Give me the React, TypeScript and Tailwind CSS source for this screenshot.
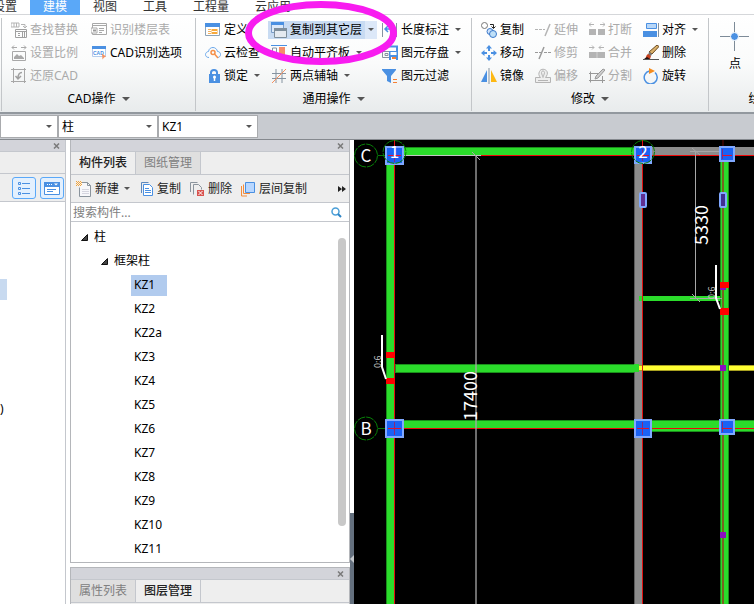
import React from "react";
import type { ReactNode } from "react";

const BLUE = "#4a90e2";
const GREY = "#b4b4b4";
const SLATE = "#8593a0";

function Icon({ children, size = 16 }: { children: ReactNode; size?: number }) {
  return (
    <svg width={size} height={size} viewBox={`0 0 ${size} ${size}`} fill="none" className="shrink-0" aria-hidden="true">
      {children}
    </svg>
  );
}

function Caret({ large = false }: { large?: boolean }) {
  return large ? (
    <svg width="8" height="4" viewBox="0 0 8 4" className="shrink-0" aria-hidden="true">
      <path d="M0 0h8L4 4z" fill="#555" />
    </svg>
  ) : (
    <svg width="6" height="3" viewBox="0 0 6 3" className="shrink-0" aria-hidden="true">
      <path d="M0 0h6L3 3z" fill="#555" />
    </svg>
  );
}

const icons = {
  findReplace: (
    <Icon>
      <path d="M0 1h8v4H0zM3 1v4M5.500 1v4M10 2.500h4v3M12 4l2 2 2-2" stroke={GREY} />
      <path d="M4.500 7.500h11v8h-11zM4 9.500h12M7 11.500h2M7 13.500h2M11.500 9v6M13.500 9v6" stroke="#a0a0a0" />
    </Icon>
  ),
  scale: (
    <Icon>
      <path d="M1 2.500h5M3 .5l-2 2 2 2M10 2.500h5M13 .5l2 2-2 2" stroke="#a8a8a8" />
      <path d="M1.500 6.500h13v9h-13z" stroke="#a8a8a8" />
      <path d="M3 14v-2l3-3 2 2 2-1 3 3v1z" fill="#a8a8a8" />
    </Icon>
  ),
  restore: (
    <Icon>
      <path d="M0 1.500h15M2.500 0v15M0 13.500h15M13.500 0v15" stroke="#a8a8a8" />
      <path d="M11 4.500c-3 0-4 2-4 6M4.500 8L7 11l3-3" stroke="#a0a0a0" strokeWidth="1.500" />
    </Icon>
  ),
  floorTable: (
    <Icon>
      <path d="M1.500 1.500h14v11h-14zM1 3.500h14" stroke="#a8a8a8" />
      <path d="M0 6h6v5H0z" fill="#fff" stroke="#a8a8a8" />
      <path d="M2 7.500h3v2H2z" fill="#999" />
      <path d="M8 6.500h5M8 8.500h5M8 10.500h3" stroke="#a8a8a8" />
    </Icon>
  ),
  cadOptions: (
    <Icon>
      <path d="M1.500 1.500h13v10h-13z" fill="#fff" stroke="#b5cdec" />
      <path d="M1 1h14v3H1z" fill={BLUE} />
      <text x="2" y="10" fontSize="5" fontWeight="700" fill={BLUE} fontFamily="Liberation Sans, sans-serif">CAD</text>
      <path d="M11 8.500l4 3-2 1-1.500 2z" fill="#f59160" />
    </Icon>
  ),
  define: (
    <Icon>
      <path d="M.5 1.500h14v12H.5z" fill="#fff" stroke="#8fa3b5" />
      <path d="M0 1h15v4H0z" fill={BLUE} />
      <path d="M3 7.500h3M3 9.500h3M3 11.500h3" stroke="#f5b25f" />
      <path d="M6.500 7h6v5h-6z" fill="#f7a93b" />
      <path d="M7 9.500h5" stroke="#fff" />
    </Icon>
  ),
  cloud: (
    <Icon>
      <path d="M4 12.500C1.500 12.500.5 11 .5 9.500S2 6.500 3.500 6.500C4 3.500 6 2.500 8 2.500s4 1.500 4.500 4c2 0 3 1.500 3 3s-1 3-3 3" stroke="#6aa7ea" />
      <circle cx="8" cy="7.500" r="2" stroke="#f5904a" strokeWidth="1.500" />
      <path d="M9.500 9l3.500 4" stroke="#f5904a" strokeWidth="1.500" />
    </Icon>
  ),
  lock: (
    <Icon>
      <path d="M6 7V4.500C6 1 12 1 12 4.500V7" stroke={BLUE} strokeWidth="2" />
      <path d="M4 6h11v9H4z" fill={BLUE} />
      <circle cx="9.500" cy="9" r="1.500" fill="#fff" />
      <path d="M9.500 9v4" stroke="#fff" strokeWidth="1.500" />
    </Icon>
  ),
  copyFloor: (
    <Icon>
      <path d="M.5.5h12v10H.5z" fill="#dce9f9" stroke="#7a9cc6" />
      <path d="M0 0h13v3H0z" fill={BLUE} />
      <path d="M3.500 6.500h12v9h-12z" fill="#e5eaf0" stroke="#7f8f9c" />
      <path d="M3 6h13v3H3z" fill="#7f8f9c" />
    </Icon>
  ),
  alignSlab: (
    <Icon>
      <path d="M0 .5h16" stroke={BLUE} />
      <path d="M1.500 3v8h4V3z" stroke={SLATE} fill="#fff" />
      <path d="M8 2h6v10H8z" fill="#f58d6a" />
    </Icon>
  ),
  auxAxis: (
    <Icon>
      <path d="M5 1v14M11 1v14M1 5.500h14M1 10.500h14" stroke={SLATE} />
      <path d="M1 15L15 1" stroke="#f59160" />
    </Icon>
  ),
  lengthMark: (
    <Icon>
      <path d="M.5 1v14M14.500 1v14" stroke={SLATE} />
      <path d="M3 7h10M6 4L3 7l3 3" stroke={BLUE} strokeWidth="1.500" />
    </Icon>
  ),
  saveElement: (
    <Icon>
      <path d="M4 1.500h11v6" stroke={BLUE} strokeWidth="2" />
      <path d="M.5 6.500h7v6h-7zM3 8.500h3v2H3z" stroke={SLATE} />
      <path d="M7 6h9v9H7z" fill={BLUE} />
      <path d="M8.500 7h6v3h-6z" fill="#fff" />
      <path d="M9 12h5v3H9z" fill="#fff" />
      <path d="M10 12h4v2h-4z" fill="#f58035" />
    </Icon>
  ),
  filter: (
    <Icon>
      <path d="M0 1h14v1L9 8v7l-4-2V8L0 2z" fill={BLUE} />
      <path d="M11 11.500h4M11 14.500h4" stroke="#f58035" />
    </Icon>
  ),
  copy: (
    <Icon>
      <circle cx="3.500" cy="3.500" r="3" fill="#fff" stroke="#777" />
      <path d="M9 2.500h3.500V6M10.500 4.500l2 2 2-2" stroke="#222" />
      <circle cx="9" cy="9.500" r="3" fill="#cfe2fa" stroke="#3a78c9" />
      <circle cx="12" cy="12" r="3.500" fill="#bfe0f8" stroke="#3a78c9" />
    </Icon>
  ),
  move: (
    <Icon>
      <path d="M8 0l3 3.500H9V6H7V3.500H5zM8 16l-3-3.500h2V10h2v2.500h2zM0 8l3.500-3v2H6v2H3.500v2zM16 8l-3.500 3V9H10V7h2.500V5z" fill={BLUE} />
    </Icon>
  ),
  mirror: (
    <Icon>
      <path d="M6 2v12H0z" fill={BLUE} />
      <path d="M8 0v16" stroke={SLATE} />
      <path d="M10 2v12h6z" fill="#fdb813" />
    </Icon>
  ),
  extend: (
    <Icon>
      <path d="M0 7.500h10" stroke={GREY} strokeDasharray="3 1" />
      <path d="M10 14l5-12" stroke={GREY} strokeWidth="1.500" />
    </Icon>
  ),
  trim: (
    <Icon>
      <path d="M0 7.500h6M9 7.500h7" stroke="#999" strokeDasharray="3 1" />
      <path d="M4 14L9 2" stroke="#999" strokeWidth="1.500" />
    </Icon>
  ),
  offset: (
    <Icon>
      <path d="M.5 14.500v-5h5c-2-2-2-4-1-6 1-3 6-3 7.500 0 1 2 0 4-1.500 6h5v5z" stroke={GREY} fill="#eee" />
      <path d="M3 12.500h10M6.500 4.500c0-2 3-2 3 0S8 8 8 9.500C8 8 6.500 6.500 6.500 4.500z" stroke={GREY} />
    </Icon>
  ),
  breakUp: (
    <Icon>
      <path d="M0 2.500h5M2 .5l-2 2 2 2M11 2.500h5M14 .5l2 2-2 2" stroke={GREY} />
      <path d="M0 7h7v6H0zM9 7h7v6H9z" fill={GREY} />
    </Icon>
  ),
  merge: (
    <Icon>
      <path d="M0 2.500h5M3 .5l2 2-2 2M15 2.500h-5M12 .5l-2 2 2 2" stroke={GREY} />
      <path d="M0 7h16v6H0z" fill={GREY} />
      <path d="M8 7v6" stroke="#d0d0d0" />
    </Icon>
  ),
  split: (
    <Icon>
      <path d="M1.500 3.500v11M0 5.500h10M0 12.500h16M13.500 8v7" stroke="#999" />
      <path d="M14 1l2 1-7 8-3 1 1-3z" fill="#ccc" stroke="#999" />
    </Icon>
  ),
  align: (
    <Icon>
      <path d="M3.500 1.500h10v5h-10z" fill="#b8d7f8" stroke={BLUE} />
      <path d="M0 9h14v6H0z" fill={BLUE} />
      <path d="M15.500 1v14" stroke={SLATE} />
    </Icon>
  ),
  brush: (
    <Icon>
      <path d="M0 14.500h16" stroke="#555" />
      <path d="M14 0l2 1.500L9 9 6 7z" fill="#d9b06a" stroke="#6b4a20" />
      <path d="M6 7l3 2-1 2-3-1z" fill="#777" />
      <path d="M5 9l3 2-1 3H2c1-1 1-4 3-5z" fill="#c8401c" />
      <path d="M1 14l3-2 3 2z" fill="#201010" />
    </Icon>
  ),
  rotate: (
    <Icon>
      <path d="M6.500 3A6.500 6.500 0 1 0 12 4.500" stroke={BLUE} strokeWidth="1.500" />
      <path d="M6 0l6 3-6 3z" fill="#f58c1f" />
    </Icon>
  ),
  newItem: (
    <Icon>
      <path d="M5.500 1.500h6l3 3v11h-11v-9" fill="#f7f7fa" stroke="#8b949d" />
      <path d="M11.500 1.500v3h3" stroke="#8b949d" />
      <path d="M6 8.500h7M6 10.500h7M6 12.500h7" stroke="#d5d5df" />
      <path d="M0 .5h5M1 1.500h5M0 2.500h5M1 3.500h5M0 4.500h5" stroke="#f2a33a" strokeDasharray="1 1" />
    </Icon>
  ),
  copyDoc: (
    <Icon size={14}>
      <path d="M1.500 11V.5h7" stroke="#5d88bd" />
      <path d="M3.500 2.500h6l3 3v8h-9z" fill="#fff" stroke={BLUE} />
      <path d="M5 6.500h4M5 8.500h6M5 10.500h6" stroke={BLUE} />
    </Icon>
  ),
  deleteDoc: (
    <Icon>
      <path d="M1.500 11V1.500h7M4.500 13.500v-10h5l3 3v2" stroke="#8b949d" />
      <path d="M8 9h7v6H8z" fill="#d9534f" />
      <path d="M9.500 10l4 4M13.500 10l-4 4" stroke="#fff" />
    </Icon>
  ),
  floorCopy: (
    <Icon>
      <path d="M1.500 5v10H7M3.500 3.500v9H10" stroke="#f58c3a" />
      <path d="M5.500 1.500h9v10h-9z" fill="#b8d7ff" stroke={BLUE} />
    </Icon>
  ),
};

type Command = { icon: ReactNode; label: string; menu?: boolean; disabled?: boolean; active?: boolean };

function RibbonCommand({ icon, label, menu, disabled, active }: Command) {
  return (
    <div className="flex h-[23px] items-center">
      <button
        disabled={disabled}
        className={`flex h-[18px] items-center gap-[3px] px-[3px] ${active ? "bg-[#c8dbf2]" : ""} ${disabled ? "text-[#aaaaaa]" : "text-black"}`}
      >
        {icon}
        {label}
      </button>
      {menu && (
        <button
          aria-label={`${label} 选项`}
          className={`flex h-[18px] w-3 items-center justify-center ${active ? "bg-[#dce8f8]" : ""}`}
        >
          <Caret />
        </button>
      )}
    </div>
  );
}

function RibbonGroup({ title, columns, commands }: { title: string; columns: string; commands: Command[] }) {
  return (
    <section className="flex shrink-0 flex-col border-l border-[#c3c6c9]">
      <div className={`grid grid-flow-col grid-rows-3 pl-[6px] ${columns}`}>
        {commands.map((c) => (
          <RibbonCommand key={c.label} {...c} />
        ))}
      </div>
      <GroupTitle>{title}</GroupTitle>
    </section>
  );
}

function GroupTitle({ children }: { children: ReactNode }) {
  return (
    <button className="flex h-6 items-center justify-center gap-[6px] text-black">
      {children}
      <Caret large />
    </button>
  );
}

const editCommands: Command[] = [
  { icon: icons.copy, label: "复制" },
  { icon: icons.move, label: "移动" },
  { icon: icons.mirror, label: "镜像" },
  { icon: icons.extend, label: "延伸", disabled: true },
  { icon: icons.trim, label: "修剪", disabled: true },
  { icon: icons.offset, label: "偏移", disabled: true },
  { icon: icons.breakUp, label: "打断", disabled: true },
  { icon: icons.merge, label: "合并", disabled: true },
  { icon: icons.split, label: "分割", disabled: true },
  { icon: icons.align, label: "对齐", menu: true },
  { icon: icons.brush, label: "删除" },
  { icon: icons.rotate, label: "旋转" },
];

const commonCommands: Command[] = [
  { icon: icons.define, label: "定义" },
  { icon: icons.cloud, label: "云检查" },
  { icon: icons.lock, label: "锁定", menu: true },
  { icon: icons.copyFloor, label: "复制到其它层", menu: true, active: true },
  { icon: icons.alignSlab, label: "自动平齐板", menu: true },
  { icon: icons.auxAxis, label: "两点辅轴", menu: true },
  { icon: icons.lengthMark, label: "长度标注", menu: true },
  { icon: icons.saveElement, label: "图元存盘", menu: true },
  { icon: icons.filter, label: "图元过滤" },
];

const cadCommands: Command[] = [
  { icon: icons.findReplace, label: "查找替换", disabled: true },
  { icon: icons.scale, label: "设置比例", disabled: true },
  { icon: icons.restore, label: "还原CAD", disabled: true },
  { icon: icons.floorTable, label: "识别楼层表", disabled: true },
  { icon: icons.cadOptions, label: "CAD识别选项" },
];

function Ribbon() {
  return (
    <header className="relative shrink-0">
      <nav className="flex h-[15px] border-b border-[#d5d7da]">
        <div className="-ml-5 flex">
          {["设置", "建模", "视图", "工具", "工程量", "云应用"].map((t) => (
            <button
              key={t}
              className={`flex h-[15px] items-start px-[13px] leading-[13px] ${t === "建模" ? "bg-[#5aa8f8] text-white" : "text-[#333]"}`}
            >
              {t}
            </button>
          ))}
        </div>
      </nav>
      <div className="flex border-b-2 border-[#92989e] bg-linear-to-b from-white via-[#fafbfb] to-[#e8ebec] pb-px pl-px pt-[3px]">
        <RibbonGroup title="CAD操作" columns="grid-cols-[80px_107px]" commands={cadCommands} />
        <RibbonGroup title="通用操作" columns="grid-cols-[66px_111px_92px]" commands={commonCommands} />
        <RibbonGroup title="修改" columns="grid-cols-[54px_54px_54px_68px]" commands={editCommands} />
        <section className="flex w-[118px] shrink-0 flex-col border-l border-[#c3c6c9]">
          <div className="flex h-[69px] pl-[11px]">
            <button className="flex flex-col items-center gap-[4px] pt-[4px]">
              <svg width="30" height="30" viewBox="0 0 30 30" fill="none" aria-hidden="true">
                <path d="M14.500 0v29M0 14.500h29" stroke="#7d8b98" />
                <circle cx="14.500" cy="14.500" r="4" fill={BLUE} stroke="#fff" />
              </svg>
              点
            </button>
          </div>
          <GroupTitle>绘图</GroupTitle>
        </section>
      </div>
      <svg width="154" height="66" viewBox="0 0 154 66" fill="none" className="pointer-events-none absolute left-[244px] top-0" aria-hidden="true">
        <ellipse cx="77" cy="33" rx="72.500" ry="28.500" stroke="#f81cf0" strokeWidth="7" />
      </svg>
    </header>
  );
}

function Combo({ label, value, width }: { label: string; value: string; width: string }) {
  return (
    <label className={`relative block shrink-0 ${width}`}>
      <span className="sr-only">{label}</span>
      <select className="block h-[23px] w-full appearance-none border border-[#a9abae] bg-white pl-[3px] text-black outline-none">
        <option>{value}</option>
      </select>
      <span className="pointer-events-none absolute right-[6px] top-[10px]">
        <Caret />
      </span>
    </label>
  );
}

function PanelHeader() {
  return (
    <div className="flex h-3 shrink-0 items-center justify-end border-b border-[#c4c7cd] bg-[#d3d4da] pr-[5px]">
      <button aria-label="关闭">
        <svg width="7" height="6" viewBox="0 0 7 6" aria-hidden="true">
          <path d="M1 .5l5 5M6 .5l-5 5" stroke="#7a7a7a" strokeWidth="1.500" />
        </svg>
      </button>
    </div>
  );
}

function Tabs({ items, selected }: { items: string[]; selected: string }) {
  return (
    <div role="tablist" className="flex h-[23px] shrink-0 border-b border-[#c4c7cd] bg-[#eeeeee]">
      {items.map((t) => (
        <button
          key={t}
          role="tab"
          aria-selected={t === selected}
          className={`border-r border-[#c4c7cd] px-2 ${t === selected ? "bg-[#eeeeee] font-medium text-[#222]" : "bg-[#dfdfdf] text-[#808080]"}`}
        >
          {t}
        </button>
      ))}
    </div>
  );
}

function NavPanel() {
  return (
    <aside className="flex w-[66px] shrink-0 flex-col overflow-hidden border-r border-[#c4c7cd] bg-white">
      <PanelHeader />
      <div className="h-[22px] shrink-0 border-b border-[#c4c7cd] bg-[#eeeeee]" />
      <div className="flex h-7 shrink-0 items-center justify-end gap-1 border-b border-[#c4c7cd] bg-[#eeeeee] pr-px">
        <button aria-label="列表" className="flex h-[22px] w-6 items-center justify-center rounded-[3px] border border-[#5aa8f8] bg-[#e3f0fe]">
          <Icon>
            <path d="M2.500 2.500h2v2h-2zM2.500 7.500h2v2h-2zM2.500 12.500h2v2h-2zM6 3.500h8M6 8.500h8M6 13.500h8" stroke={BLUE} />
          </Icon>
        </button>
        <button aria-label="窗口" className="flex h-[22px] w-6 items-center justify-center rounded-[3px] border border-[#5aa8f8] bg-[#e3f0fe]">
          <Icon>
            <path d="M.5 2.500h15v12H.5z" fill="#fff" stroke={BLUE} />
            <path d="M0 2h16v5H0z" fill={BLUE} />
            <path d="M3 4.500h5" stroke="#fff" strokeDasharray="1 1" />
            <path d="M10 3.500h4l-2 2z" fill="#fff" />
            <path d="M3 9.500h9M3 11.500h6" stroke={BLUE} />
          </Icon>
        </button>
      </div>
      <ul className="pt-[75px]">
        <li className="flex h-6 items-center">
          <span className="h-[21px] w-[7px] bg-[#c8daf0]" />
        </li>
        <li className="h-24" />
        <li className="flex h-6 items-center">)</li>
      </ul>
    </aside>
  );
}

const members = ["KZ1", "KZ2", "KZ2a", "KZ3", "KZ4", "KZ5", "KZ6", "KZ7", "KZ8", "KZ9", "KZ10", "KZ11"];

function Expander({ label, indent }: { label: string; indent: string }) {
  return (
    <button className={`flex h-6 items-center gap-[6px] ${indent}`}>
      <svg width="7" height="7" viewBox="0 0 7 7" aria-hidden="true">
        <path d="M6.500 .5v6h-6z" fill="#444" stroke="#111" />
      </svg>
      {label}
    </button>
  );
}

function ToolButton({ icon, label, menu }: Command) {
  return (
    <button className="flex shrink-0 items-center gap-[3px]">
      {icon}
      {label}
      {menu && (
        <span className="px-[2px]">
          <Caret />
        </span>
      )}
    </button>
  );
}

function MemberPanel() {
  return (
    <div className="mx-1 flex w-[280px] shrink-0 flex-col gap-1">
      <section className="flex min-h-0 flex-1 flex-col border-x border-b border-[#b4b6ba]">
        <PanelHeader />
        <Tabs items={["构件列表", "图纸管理"]} selected="构件列表" />
        <div className="flex h-7 shrink-0 items-center border-b border-[#c4c7cd] bg-[#eeeeee] pl-[5px] pr-[3px] text-[#222]">
          <div className="flex flex-1 gap-2">
            <ToolButton icon={icons.newItem} label="新建" menu />
            <ToolButton icon={icons.copyDoc} label="复制" />
            <ToolButton icon={icons.deleteDoc} label="删除" />
            <ToolButton icon={icons.floorCopy} label="层间复制" />
          </div>
          <button aria-label="更多">
            <svg width="8" height="6" viewBox="0 0 8 6" aria-hidden="true">
              <path d="M0 0l4 3-4 3zM4 0l4 3-4 3z" fill="#222" />
            </svg>
          </button>
        </div>
        <label className="flex h-[19px] shrink-0 items-center border-b border-[#c4c7cd] bg-white pr-[7px]">
          <span className="sr-only">搜索构件</span>
          <input placeholder="搜索构件..." className="h-[18px] min-w-0 flex-1 pl-[2px] outline-none placeholder:text-[#808080]" />
          <svg width="11" height="11" viewBox="0 0 11 11" fill="none" aria-hidden="true">
            <circle cx="4.500" cy="4.500" r="3.500" stroke="#4b9fd8" strokeWidth="1.500" />
            <path d="M7 7l3 3" stroke="#2c83c4" strokeWidth="2" />
          </svg>
        </label>
        <div className="flex min-h-0 flex-1 bg-white pt-[3px] text-black">
          <div className="flex flex-1 flex-col items-start">
            <Expander label="柱" indent="pl-[10px]" />
            <Expander label="框架柱" indent="pl-[30px]" />
            <ul className="pl-[60px]">
              {members.map((m) => (
                <li key={m} className="flex h-6 items-center">
                  <button className={`h-[21px] pl-[3px] pr-3 text-left ${m === "KZ1" ? "bg-[#b1cbee]" : ""}`}>{m}</button>
                </li>
              ))}
            </ul>
          </div>
          <div className="mb-9 mr-[3px] mt-[13px] w-2 rounded-full bg-[#c8c8c8]" />
        </div>
      </section>
      <section className="flex h-[37px] shrink-0 flex-col border-x border-t border-[#b4b6ba] bg-[#eeeeee]">
        <PanelHeader />
        <Tabs items={["属性列表", "图层管理"]} selected="图层管理" />
      </section>
    </div>
  );
}

function Column({ x, y, w, h, ax, ay }: { x: number; y: number; w: number; h: number; ax: number; ay: number }) {
  return (
    <g>
      <rect x={x + 1} y={y + 1} width={w - 2} height={h - 2} fill="#1a62f5" stroke="#80a8ff" strokeWidth="2" />
      <path d={`M${ax} ${y + 3}V${y + h - 3}`} stroke="#8a2a78" strokeWidth="1" />
      <path d={`M${x + 3} ${ay}H${x + w - 3}`} stroke="#e01030" strokeWidth="1" />
    </g>
  );
}

function AxisBubble({ cx, cy, label }: { cx: number; cy: number; label: string }) {
  return (
    <g>
      <circle cx={cx} cy={cy} r="11.500" fill="none" stroke="#088008" strokeDasharray="8 1" />
      <text x={cx} y={cy + 6} textAnchor="middle" fontSize="17" fill="#fff">
        {label}
      </text>
    </g>
  );
}

// Plan coordinates start at (354, 140), the top left corner of the drawing area.
function PlanView() {
  return (
    <main className="min-w-0 flex-1 overflow-hidden bg-black">
      <svg className="block h-full w-full" fill="none" fontFamily='"Noto Sans CJK SC", sans-serif' role="img" aria-label="平面图">
        <g transform="translate(-354 -140)">
          <g fill="#2bdc2b" stroke="#1a8f1a" strokeWidth="1">
            <rect x="394.500" y="147.500" width="241" height="8" />
            <rect x="386.500" y="156.500" width="8" height="460" />
            <rect x="394.500" y="420.500" width="241" height="8" />
            <rect x="650.500" y="420.500" width="120" height="11" />
            <rect x="395.500" y="364.500" width="244" height="8" />
          </g>
          <rect x="643" y="147" width="120" height="9" fill="#8c8c8c" />
          <rect x="634" y="156" width="9" height="460" fill="#8c8c8c" />
          <path d="M634.500 156V616" stroke="#5c5c5c" />
          <rect x="639" y="296" width="82" height="5" fill="#2bdc2b" />
          <rect x="639" y="365" width="120" height="6" fill="#a8a020" />
          <rect x="639" y="366" width="120" height="4" fill="#ffff32" />
          <rect x="634" y="364" width="5" height="8" fill="#2bdc2b" />
          <rect x="720.500" y="156.500" width="8" height="460" fill="#2bdc2b" stroke="#1a8f1a" />
          <path d="M723 156V616" stroke="#786420" strokeWidth="2" />
          <path d="M394.500 140V616M642.500 140V616" stroke="#e01010" />
          <path d="M478 155.500H760M394 428.500H760" stroke="#f00808" />
          <path d="M723 140V150" stroke="#600808" />
          <path d="M402 155.500H481" stroke="#c4c4c4" />
          <path d="M476 156V616" stroke="#a8a8a8" strokeOpacity="0.65" strokeWidth="2" />
          <path d="M472 152L480 160M695.500 152V298M690 151.500H722M690 298.500H722M692 148L700 155M692 294L700 302" stroke="#a8a8a8" />
          <path d="M378 155.500H395M378 428.500H395" stroke="#067806" />

          <Column x={385} y={146} w={19} h={19} ax={394.500} ay={155.500} />
          <Column x={385} y={419} w={19} h={19} ax={394.500} ay={428.500} />
          <Column x={634} y={146} w={18} h={18} ax={642.500} ay={155.500} />
          <Column x={634} y={419} w={18} h={19} ax={642.500} ay={428.500} />
          <Column x={719} y={146} w={16} h={16} ax={722.500} ay={155.500} />
          <Column x={719} y={419} w={16} h={16} ax={722.500} ay={428.500} />

          <rect x="640" y="193" width="6" height="14" rx="1" fill="#603090" stroke="#80a8ff" strokeWidth="2" />
          <rect x="720" y="193" width="6" height="14" rx="1" fill="#403090" stroke="#80a8ff" strokeWidth="2" />

          <g fill="#ff0000">
            <rect x="386" y="352" width="9" height="6" />
            <rect x="386" y="378" width="9" height="6" />
            <rect x="720" y="282" width="9" height="6" />
            <rect x="720" y="308" width="9" height="7" />
          </g>
          <g fill="#8a0fc0">
            <rect x="720" y="365" width="6" height="6" />
            <rect x="720" y="532" width="6" height="6" />
            <rect x="720" y="288" width="6" height="2" />
          </g>
          <path d="M382 335V367L386 379M716 265V298L720 309" stroke="#ffffff" strokeWidth="2" />

          <AxisBubble cx={366} cy={155.5} label="C" />
          <AxisBubble cx={366} cy={428.5} label="B" />
          <AxisBubble cx={394.5} cy={152} label="1" />
          <AxisBubble cx={643} cy={152} label="2" />

          <g fill="#ffffff">
            <text transform="translate(477 421) rotate(-90)" fontSize="18">17400</text>
            <text transform="translate(708 245) rotate(-90)" fontSize="18">5330</text>
            <text transform="translate(381 368) rotate(-90)" fontSize="9" fill="#c8c8c8">0:6</text>
            <text transform="translate(715 299) rotate(-90)" fontSize="9" fill="#c8c8c8">0:6</text>
          </g>
        </g>
      </svg>
    </main>
  );
}

export default function App() {
  return (
    <div className="flex h-screen flex-col overflow-hidden bg-white font-['Noto_Sans','Noto_Sans_CJK_SC',sans-serif] text-[12px] leading-[16px] text-black">
      <Ribbon />
      <div className="flex shrink-0 border-b border-[#85898e] bg-[#c8cbd0] py-px">
        <Combo label="楼层" value="" width="w-[58px]" />
        <Combo label="构件类型" value="柱" width="w-[100px]" />
        <Combo label="构件" value="KZ1" width="w-[100px]" />
      </div>
      <div className="flex min-h-0 flex-1">
        <NavPanel />
        <MemberPanel />
        <div className="relative flex min-w-0 flex-1">
          <button aria-label="折叠面板" className="absolute -left-1 bottom-0 flex h-[91px] w-1 items-center bg-[#64707e]">
            <svg width="4" height="8" viewBox="0 0 4 8" aria-hidden="true">
              <path d="M4 0v8L0 4z" fill="#c4c8cc" />
            </svg>
          </button>
          <PlanView />
        </div>
      </div>
    </div>
  );
}
